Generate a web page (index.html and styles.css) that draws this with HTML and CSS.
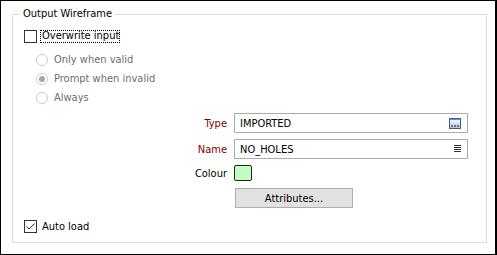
FILE: index.html
```html
<!DOCTYPE html>
<html lang="en">
<head>
    <meta charset="UTF-8">
    <title>Output Wireframe</title>
    <link rel="stylesheet" href="styles.css">
</head>
<body>
    <div class="window">
        <div class="group">
            <span class="legend">Output Wireframe</span>

            <div class="check-row">
                <span class="checkbox"></span>
                <span class="focus-label">Overwrite input</span>
            </div>

            <div class="radios">
                <div class="radio-row">
                    <span class="radio"></span>
                    <span>Only when valid</span>
                </div>
                <div class="radio-row">
                    <span class="radio checked"></span>
                    <span>Prompt when invalid</span>
                </div>
                <div class="radio-row">
                    <span class="radio"></span>
                    <span>Always</span>
                </div>
            </div>

            <div class="form">
                <label class="field-label req">Type</label>
                <div class="input">
                    <span>IMPORTED</span>
                    <svg class="icon" width="12" height="11" viewBox="0 0 12 11">
                        <defs>
                            <linearGradient id="btnGrad" x1="0" y1="0" x2="0" y2="1">
                                <stop offset="0" stop-color="#ffffff"/>
                                <stop offset="1" stop-color="#9cc4f0"/>
                            </linearGradient>
                        </defs>
                        <rect x="0.5" y="0.5" width="11" height="10" fill="url(#btnGrad)" stroke="#3f5f86"/>
                        <rect x="1" y="1" width="10" height="1" fill="#6f8fb8"/>
                        <rect x="2" y="7" width="2" height="2" fill="#9a6a3a"/>
                        <rect x="5" y="7" width="2" height="2" fill="#9a6a3a"/>
                        <rect x="8" y="7" width="2" height="2" fill="#9a6a3a"/>
                    </svg>
                </div>

                <label class="field-label req">Name</label>
                <div class="input">
                    <span>NO_HOLES</span>
                    <svg class="icon" width="7" height="8" viewBox="0 0 7 8">
                        <rect x="0" y="0" width="7" height="1" fill="#333"/>
                        <rect x="0" y="2" width="7" height="1" fill="#333"/>
                        <rect x="0" y="4" width="7" height="1" fill="#333"/>
                        <rect x="0" y="6" width="7" height="1" fill="#333"/>
                    </svg>
                </div>

                <label class="field-label colour-label">Colour</label>
                <div class="swatch-cell">
                    <span class="swatch"></span>
                </div>

                <span></span>
                <div class="button-cell">
                    <button class="button">Attributes...</button>
                </div>
            </div>

            <div class="check-row auto">
                <span class="checkbox">
                    <svg width="11" height="11" viewBox="0 0 11 11">
                        <path d="M1.5 5.5 L4 8 L9.5 2.5" fill="none" stroke="#333" stroke-width="1"/>
                    </svg>
                </span>
                <span class="auto-label">Auto load</span>
            </div>
        </div>
    </div>
</body>
</html>
```

FILE: styles.css
```css
* { margin: 0; padding: 0; box-sizing: border-box; }
body {
    background: white;
    font-family: "DejaVu Sans Condensed", "Liberation Sans", sans-serif;
    font-size: 11px;
    color: #000;
}
.window {
    width: 497px;
    height: 255px;
    border: 1px solid #000;
    border-right-width: 2px;
    padding: 13px 8px 11px 11px;
    display: flex;
}
.group {
    flex: 1;
    border: 1px solid #dcdcdc;
    position: relative;
    padding: 15px 0 0 11px;
    display: flex;
    flex-direction: column;
}
.legend {
    position: absolute;
    top: -8px;
    left: 7px;
    padding: 0 3px;
    background: white;
    line-height: 14px;
}
.check-row {
    display: flex;
    align-items: center;
    height: 13px;
}
.checkbox {
    width: 13px;
    height: 13px;
    border: 1px solid #333;
    background: white;
    display: flex;
    align-items: center;
    justify-content: center;
}
.focus-label {
    margin-left: 3px;
    padding: 0 1px 0 2px;
    height: 13px;
    line-height: 12px;
    outline: 1px dotted #000;
    outline-offset: -1px;
}
.radios {
    margin-top: 10px;
    padding-left: 12px;
    display: flex;
    flex-direction: column;
    gap: 6px;
    color: #6d6d6d;
}
.radio-row {
    display: flex;
    align-items: center;
    height: 13px;
    gap: 6px;
}
.radio {
    width: 12px;
    height: 12px;
    border: 1px solid #cccccc;
    border-radius: 50%;
    background: white;
    display: flex;
    align-items: center;
    justify-content: center;
}
.radio.checked::after {
    content: "";
    width: 6px;
    height: 6px;
    border-radius: 50%;
    background: #a6a6a6;
}
.form {
    margin-top: 9px;
    margin-left: -11px;
    display: grid;
    grid-template-columns: 214px 234px;
    column-gap: 7px;
    align-items: center;
}
.field-label {
    text-align: right;
    margin-bottom: 6px;
}
.req {
    color: #800000;
}
.input {
    height: 20px;
    border: 1px solid #ababab;
    padding: 0 6px 0 5px;
    display: flex;
    align-items: center;
    justify-content: space-between;
    margin-bottom: 6px;
}
.colour-label {
    margin-bottom: 0;
}
.swatch-cell {
    height: 16px;
    display: flex;
}
.swatch {
    width: 18px;
    height: 16px;
    background: #c0ffc0;
    border: 1px solid #222;
    border-radius: 2px;
}
.button-cell {
    margin-top: 7px;
    padding-left: 1px;
    display: flex;
}
.button {
    width: 118px;
    height: 20px;
    background: #e1e1e1;
    border: 1px solid #adadad;
    font: inherit;
    color: #000;
}
.auto {
    margin-top: 12px;
}
.auto-label {
    margin-left: 5px;
}
```
